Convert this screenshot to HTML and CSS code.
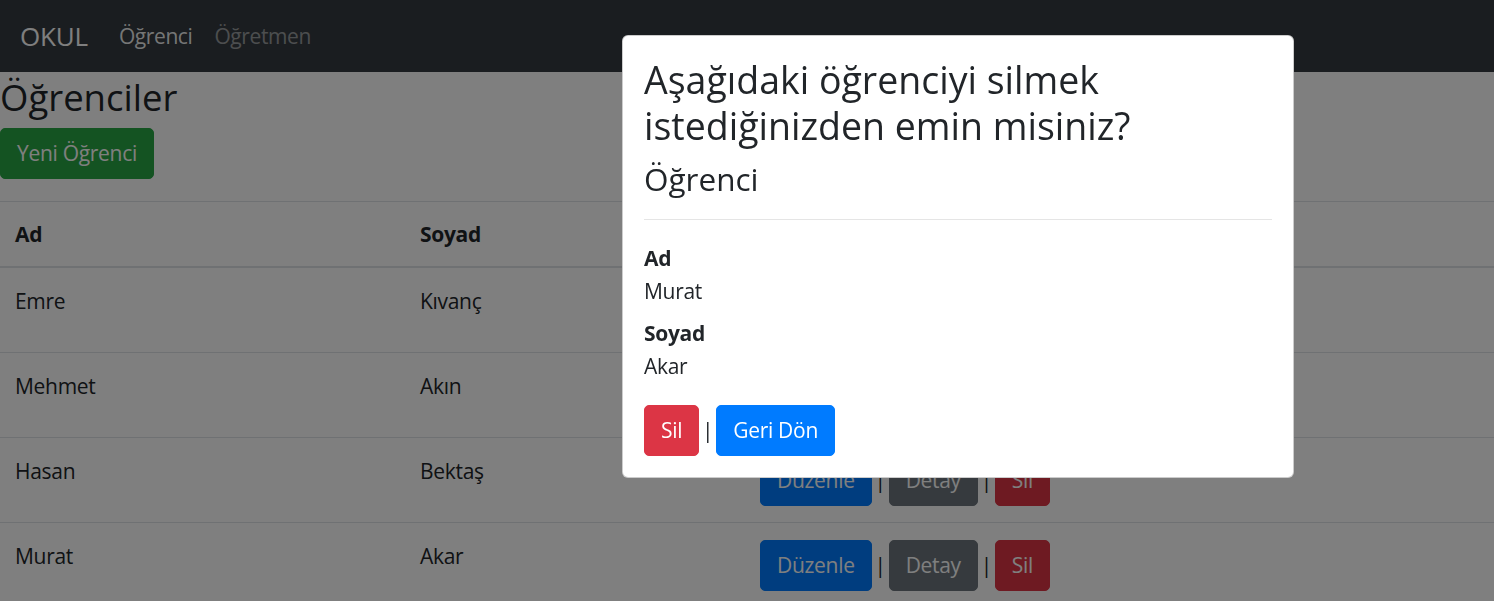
FILE: index.html
```html
<!DOCTYPE html>
<html lang="tr">
<head>
<meta charset="utf-8">
<title>Öğrenciler</title>
<link rel="stylesheet" href="styles.css">
</head>
<body>
<nav class="navbar">
  <a class="brand" href="#">OKUL</a>
  <a class="nav-link active" href="#">Öğrenci</a>
  <a class="nav-link" href="#">Öğretmen</a>
</nav>
<main class="content">
  <h1 class="page-title">Öğrenciler</h1>
  <p class="actions-top"><a class="btn btn-success" href="#">Yeni Öğrenci</a></p>
  <table class="table">
    <colgroup><col class="c-ad"><col class="c-soyad"><col></colgroup>
    <thead>
      <tr><th>Ad</th><th>Soyad</th><th></th></tr>
    </thead>
    <tbody>
      <tr><td>Emre</td><td>Kıvanç</td><td><div class="row-actions"><a class="btn btn-primary" href="#">Düzenle</a><span class="sep">|</span><a class="btn btn-secondary" href="#">Detay</a><span class="sep">|</span><a class="btn btn-danger" href="#">Sil</a></div></td></tr>
      <tr><td>Mehmet</td><td>Akın</td><td><div class="row-actions"><a class="btn btn-primary" href="#">Düzenle</a><span class="sep">|</span><a class="btn btn-secondary" href="#">Detay</a><span class="sep">|</span><a class="btn btn-danger" href="#">Sil</a></div></td></tr>
      <tr><td>Hasan</td><td>Bektaş</td><td><div class="row-actions"><a class="btn btn-primary" href="#">Düzenle</a><span class="sep">|</span><a class="btn btn-secondary" href="#">Detay</a><span class="sep">|</span><a class="btn btn-danger" href="#">Sil</a></div></td></tr>
      <tr><td>Murat</td><td>Akar</td><td><div class="row-actions"><a class="btn btn-primary" href="#">Düzenle</a><span class="sep">|</span><a class="btn btn-secondary" href="#">Detay</a><span class="sep">|</span><a class="btn btn-danger" href="#">Sil</a></div></td></tr>
    </tbody>
  </table>
</main>
<div class="backdrop"></div>
<div class="modal">
  <h3 class="modal-title">Aşağıdaki öğrenciyi silmek istediğinizden emin misiniz?</h3>
  <h4 class="modal-sub">Öğrenci</h4>
  <hr class="divider">
  <dl class="details">
    <dt>Ad</dt>
    <dd>Murat</dd>
    <dt>Soyad</dt>
    <dd>Akar</dd>
  </dl>
  <div class="row-actions">
    <a class="btn btn-danger" href="#">Sil</a><span class="sep">|</span><a class="btn btn-primary" href="#">Geri Dön</a>
  </div>
</div>
</body>
</html>
```

FILE: styles.css
```css
* { box-sizing: border-box; }

html, body {
  margin: 0;
  padding: 0;
}

body {
  font-family: "Open Sans", "Noto Sans", sans-serif;
  font-size: 21px;
  line-height: 33px;
  letter-spacing: -0.3px;
  color: #212529;
  background: #fff;
  overflow: hidden;
}

a { text-decoration: none; }

.navbar {
  height: 72px;
  background: #343a40;
  display: flex;
  align-items: center;
  padding: 0 20px;
}

.brand {
  font-size: 26px;
  line-height: 40px;
  letter-spacing: -0.2px;
  color: #fff;
  margin-right: 20px;
}

.nav-link {
  font-size: 21px;
  line-height: 33px;
  letter-spacing: -0.4px;
  padding: 0 11px;
  color: rgba(255, 255, 255, 0.5);
}

.nav-link.active {
  color: rgba(255, 255, 255, 0.92);
}

.page-title {
  font-size: 36.5px;
  line-height: 46px;
  letter-spacing: 0;
  font-weight: 400;
  margin: 0 0 8px;
  padding-top: 2px;
}

.actions-top {
  margin: 0 0 22px;
  display: flex;
}

.btn {
  display: inline-block;
  font-size: 21px;
  line-height: 33px;
  padding: 8px 16px;
  border: 1px solid transparent;
  border-radius: 5px;
  color: #fff;
  white-space: nowrap;
}

.btn-success { background: #28a745; border-color: #28a745; }
.btn-primary { background: #007bff; border-color: #007bff; }
.btn-secondary { background: #6c757d; border-color: #6c757d; }
.btn-danger { background: #dc3545; border-color: #dc3545; }

.table {
  width: 100%;
  border-collapse: collapse;
  table-layout: fixed;
}

.c-ad { width: 405px; }
.c-soyad { width: 340px; }

.table th,
.table td {
  text-align: left;
  vertical-align: top;
  border-top: 1px solid #dee2e6;
}

.table th {
  font-weight: 700;
  padding: 16px 15px 15px;
  border-bottom: 2px solid #dee2e6;
}

.table td {
  padding: 16.5px 15px 16.5px;
}

.row-actions {
  display: flex;
  align-items: center;
}

.sep {
  width: 17px;
  text-align: center;
  color: #212529;
}

.backdrop {
  position: fixed;
  inset: 0;
  background: rgba(0, 0, 0, 0.5);
}

.modal {
  position: absolute;
  top: 35px;
  left: 622px;
  width: 672px;
  background: #fff;
  border: 1px solid rgba(0, 0, 0, 0.2);
  border-radius: 6px;
  padding: 21px 21px 21px;
}

.modal-title {
  font-size: 37.5px;
  line-height: 46px;
  letter-spacing: 0;
  font-weight: 400;
  margin: 0 0 10px;
}

.modal-sub {
  font-size: 31.5px;
  line-height: 39.6px;
  letter-spacing: 0;
  font-weight: 400;
  margin: 0;
}

.divider {
  border: 0;
  border-top: 1px solid rgba(0, 0, 0, 0.1);
  margin: 20px 0 22px;
}

.details {
  margin: 0 0 22px;
}

.details dt {
  font-weight: 700;
}

.details dd {
  margin: 0 0 9px;
}

.details dd:last-child {
  margin-bottom: 0;
}
```
